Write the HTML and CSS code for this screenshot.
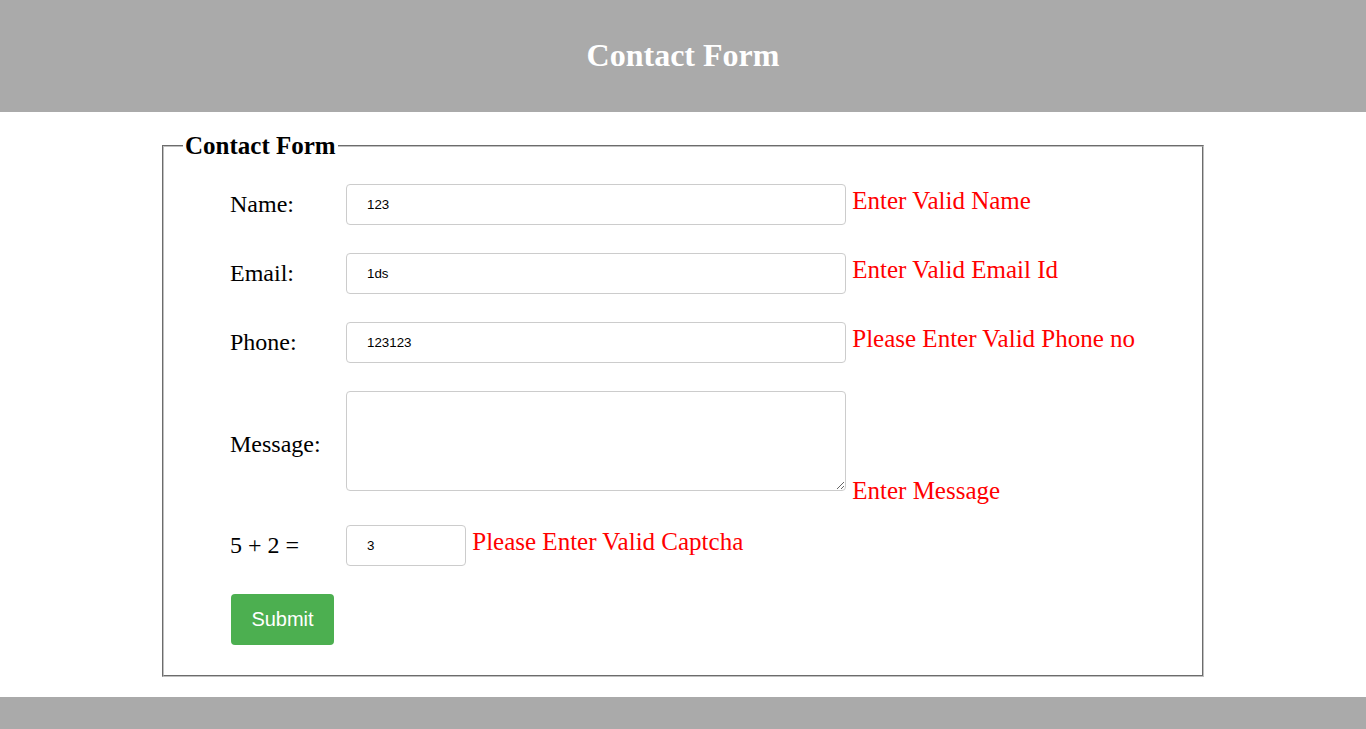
FILE: index.html
```html
<!DOCTYPE html>
<html>
<head>
<meta charset="utf-8">
<title>Contact Form</title>
<link rel="stylesheet" href="styles.css">
</head>
<body>
<header class="top">
  <h1 class="top-title">Contact Form</h1>
</header>
<main class="main">
  <fieldset class="box">
    <legend class="box-legend">Contact Form</legend>
    <form class="form">
      <label class="lbl" for="name">Name:</label>
      <div class="field"><input class="inp" id="name" type="text" value="123"> <span class="err">Enter Valid Name</span></div>

      <label class="lbl" for="email">Email:</label>
      <div class="field"><input class="inp" id="email" type="text" value="1ds"> <span class="err">Enter Valid Email Id</span></div>

      <label class="lbl" for="phone">Phone:</label>
      <div class="field"><input class="inp" id="phone" type="text" value="123123"> <span class="err">Please Enter Valid Phone no</span></div>

      <label class="lbl" for="msg">Message:</label>
      <div class="field"><textarea class="inp ta" id="msg"></textarea> <span class="err">Enter Message</span></div>

      <label class="lbl" for="cap">5 + 2 =</label>
      <div class="field"><input class="inp cap" id="cap" type="text" value="3"> <span class="err">Please Enter Valid Captcha</span></div>

      <div class="actions"><button class="btn" type="button">Submit</button></div>
    </form>
  </fieldset>
</main>
<footer class="bottom"></footer>
</body>
</html>
```
FILE: styles.css
```css
html, body {
  margin: 0;
  padding: 0;
}
body {
  font-family: "Liberation Serif", "Times New Roman", serif;
  color: #000;
  background: #fff;
}
.top {
  height: 112px;
  background: #aaaaaa;
  display: flex;
  align-items: center;
  justify-content: center;
}
.top-title {
  margin: 0 0 2px;
  color: #fff;
  font-size: 32px;
  font-weight: bold;
}
.main {
  padding: 20px 0 20px;
}
.box {
  box-sizing: border-box;
  width: 1042px;
  margin: 0 auto;
  padding: 17px 12px 22px 12px;
  border: 2px groove rgb(192, 192, 192);
}
.box-legend {
  font-size: 25px;
  font-weight: bold;
  line-height: 27px;
  padding: 0 2px;
  margin-left: 7px;
}
.form {
  display: grid;
  grid-template-columns: 116px 1fr;
  row-gap: 12px;
  align-items: center;
  margin-left: 54px;
}
.lbl {
  font-size: 24px;
}
.field {
  font-size: 25px;
}
.inp {
  box-sizing: border-box;
  width: 500px;
  height: 41px;
  padding: 12px 20px;
  margin: 8px 0;
  border: 1px solid #ccc;
  border-radius: 4px;
  font-family: "Liberation Sans", Arial, sans-serif;
  font-size: 13.33px;
  color: #000;
  vertical-align: baseline;
}
.ta {
  height: 100px;
  resize: vertical;
}
.cap {
  width: 120px;
}
.err {
  color: #ff0000;
  font-size: 25px;
}
.actions {
  grid-column: 1 / -1;
}
.btn {
  width: 103px;
  margin: 8px 0 8px 1px;
  padding: 14px 0;
  border: none;
  border-radius: 4px;
  background: #4caf50;
  color: #fff;
  font-family: "Liberation Sans", Arial, sans-serif;
  font-size: 20px;
  cursor: pointer;
}
.bottom {
  height: 32px;
  background: #aaaaaa;
}
```
